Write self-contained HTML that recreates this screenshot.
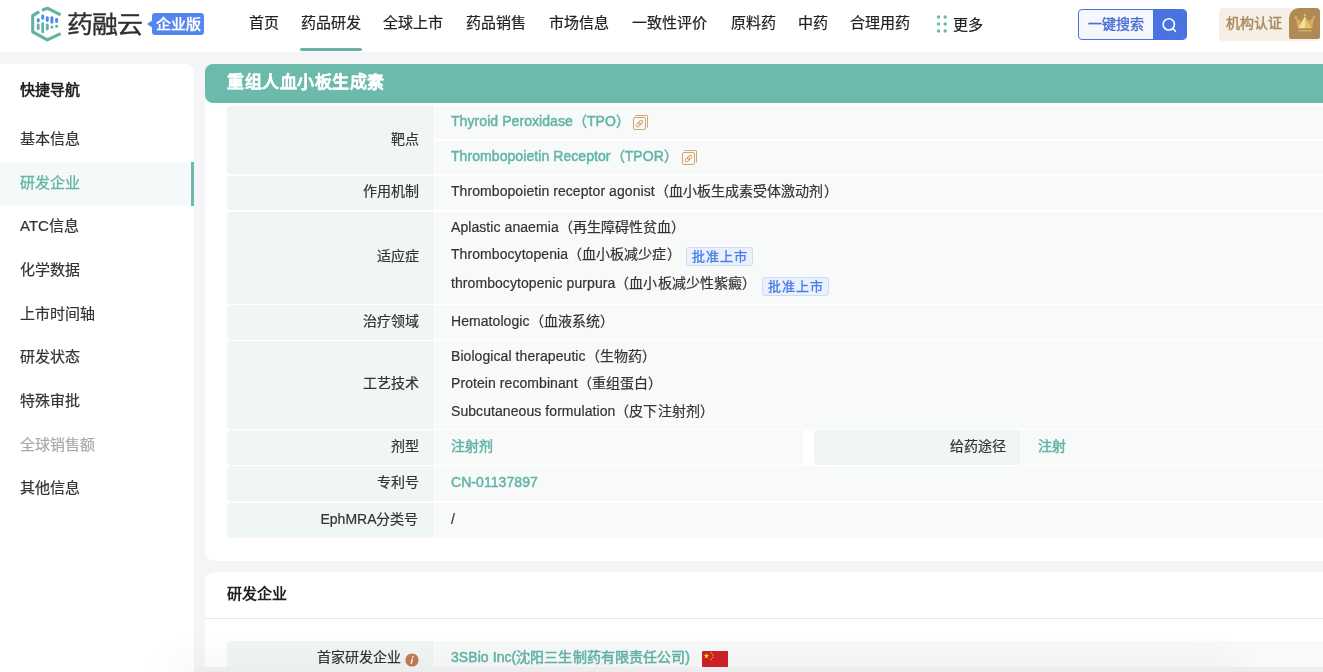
<!DOCTYPE html>
<html lang="zh-CN">
<head>
<meta charset="utf-8">
<style>
*{margin:0;padding:0;box-sizing:border-box;}
html,body{width:1323px;height:672px;overflow:hidden;}
body{background:#f5f5f7;font-family:"Liberation Sans",sans-serif;color:#333;position:relative;font-size:14px;-webkit-text-stroke-width:0.2px;}
#wrap{position:absolute;left:0;top:0;width:1323px;height:672px;will-change:transform;}
.abs{position:absolute;}
#hdr{position:absolute;left:0;top:0;width:1323px;height:52px;background:#fff;}
.nav{position:absolute;top:0;height:52px;line-height:46px;font-size:15px;color:#222;white-space:nowrap;}
.uline{position:absolute;left:300px;top:48px;width:62px;height:3px;border-radius:2px;background:#68b5a8;}
#side{position:absolute;left:0;top:64px;width:194px;height:620px;background:#fff;border-top-right-radius:8px;}
.si{position:absolute;left:20px;font-size:15px;color:#333;white-space:nowrap;line-height:20px;}
#card1{position:absolute;left:205px;top:64px;width:1130px;height:497px;background:#fff;border-radius:10px;}
#title{-webkit-text-stroke-width:0.12px;position:absolute;left:205px;top:64px;width:1130px;height:39px;background:#6cbaac;border-radius:8px;color:#fff;font-size:17px;letter-spacing:0.5px;font-weight:bold;line-height:38px;padding-left:22px;}
.row{position:absolute;left:227px;width:1110px;}
.lab{position:absolute;left:0;top:0;bottom:0;width:206.5px;background:#f0f5f5;border-radius:4px 0 0 4px;text-align:right;padding-right:15px;font-size:14px;color:#333;}
.val{position:absolute;left:208px;top:0;bottom:0;right:0;background:#f8fafa;font-size:14px;color:#333;}
.ln{position:absolute;left:16px;letter-spacing:0.07px;white-space:nowrap;line-height:20px;}
.teal{color:#63b5a7;-webkit-text-stroke:0.5px #63b5a7;}
.tag{display:inline-block;position:relative;top:1.5px;width:67px;height:19px;line-height:17px;padding:0 0 0 1px;text-align:center;border:1px solid #cfdcf7;background:#eaf1fd;color:#4a7ee6;font-size:13px;letter-spacing:1px;-webkit-text-stroke-width:0.35px;border-radius:3px;vertical-align:middle;}
#card2{position:absolute;left:205px;top:572px;width:1130px;height:120px;background:#fff;border-radius:10px;}
</style>
</head>
<body><div id="wrap">
<div id="hdr">
  <svg class="abs" style="left:26px;top:2px" width="40" height="44" viewBox="0 0 40 44">
    <g fill="none" stroke="#62b3a3" stroke-width="3.1" stroke-linecap="butt" stroke-linejoin="round">
      <path d="M16.0 8.3 L21.3 6.2 L34.6 12.9"/>
      <path d="M13.2 9.6 L6.7 13.6 L6.7 29.8 L21.3 37.9 L34.6 31.6"/>
    </g>
    <g stroke-linecap="round" stroke-width="2.9">
      <path d="M12.2 17.6 L12.2 19.0" stroke="#4a8af0"/>
      <path d="M16.7 13.9 L16.7 16.3" stroke="#4a8af0"/>
      <path d="M21.3 15.6 L21.3 18.6" stroke="#4a8af0"/>
      <path d="M25.9 15.6 L25.9 20.2" stroke="#4a8af0"/>
      <path d="M30.6 17.4 L30.6 19.6" stroke="#4a8af0"/>
      <path d="M12.2 23.0 L12.2 26.8" stroke="#62b3a3"/>
      <path d="M16.7 21.7 L16.7 30.0" stroke="#62b3a3"/>
      <path d="M21.3 23.0 L21.3 27.1" stroke="#62b3a3"/>
      <path d="M25.9 25.0 L25.9 25.2" stroke="#62b3a3"/>
      <path d="M30.6 24.2 L30.6 24.4" stroke="#62b3a3"/>
    </g>
  </svg>
  <div class="abs" style="left:67px;top:6px;font-size:26px;line-height:34px;color:#2e2e2e;letter-spacing:-1px;transform:scaleY(0.92);transform-origin:0 100%;-webkit-text-stroke-width:0.4px;">药融云</div>
  <div class="abs" style="left:152px;top:13px;width:52px;height:22px;background:#5486ee;border-radius:3px;"></div><div class="abs" style="left:152px;top:13px;width:52px;height:22px;color:#fff;font-size:15px;font-weight:bold;-webkit-text-stroke-width:0;line-height:22px;text-align:center;transform:scaleY(0.9);transform-origin:50% 80%;">企业版</div>
  <div class="abs" style="left:147px;top:20px;width:0;height:0;border-top:4px solid transparent;border-bottom:4px solid transparent;border-right:6px solid #5486ee;"></div>

  <div class="nav" style="left:249px">首页</div>
  <div class="nav" style="left:301px">药品研发</div>
  <div class="nav" style="left:383px">全球上市</div>
  <div class="nav" style="left:466px">药品销售</div>
  <div class="nav" style="left:549px">市场信息</div>
  <div class="nav" style="left:632px">一致性评价</div>
  <div class="nav" style="left:730.5px">原料药</div>
  <div class="nav" style="left:798px">中药</div>
  <div class="nav" style="left:850px">合理用药</div>
  <svg class="abs" style="left:930px;top:10px" width="20" height="26" viewBox="0 0 20 26"><g fill="#6cbaac"><circle cx="8.5" cy="7.1" r="1.75"/><circle cx="15.2" cy="7.1" r="1.75"/><circle cx="8.5" cy="14.1" r="1.75"/><circle cx="15.2" cy="14.1" r="1.75"/><circle cx="8.5" cy="21" r="1.75"/><circle cx="15.2" cy="21" r="1.75"/></g></svg>
  <div class="nav" style="left:953px;line-height:50px">更多</div>
  <div class="uline"></div>

  <div class="abs" style="left:1078px;top:9px;width:109px;height:31px;border:1px solid #4a73e0;border-radius:4px;background:#f4f7fe;overflow:hidden;">
    <div class="abs" style="left:9px;top:0;line-height:29px;font-size:14px;color:#4a6fd6;-webkit-text-stroke-width:0.4px;">一键搜索</div>
    <div class="abs" style="left:74px;top:-1px;width:35px;height:31px;background:#4a72e0;"></div>
    <svg class="abs" style="left:82px;top:6px" width="18" height="18" viewBox="0 0 18 18"><circle cx="7.8" cy="8.4" r="5.6" fill="none" stroke="#fff" stroke-width="1.6"/><line x1="11.9" y1="12.5" x2="14.4" y2="15.3" stroke="#fff" stroke-width="1.6" stroke-linecap="round"/></svg>
  </div>
  <div class="abs" style="left:1219px;top:8px;width:101px;height:33px;background:#f5efe6;border-radius:4px;overflow:hidden;">
    <div class="abs" style="left:7px;top:0;line-height:31px;font-size:14px;color:#a8885a;-webkit-text-stroke-width:0.4px;">机构认证</div>
    <div class="abs" style="left:70px;top:0;width:31px;height:31px;background:#b08a56;border-radius:10px 2px 2px 2px;"></div>
  </div>
  <svg class="abs" style="left:1280px;top:5px" width="43" height="40" viewBox="0 0 43 40">
    <polygon points="15.8,12.5 21.3,16.3 17.9,23.2" fill="#dcae58"/>
    <polygon points="33.9,12.5 28.7,16.3 32.1,23.2" fill="#dcae58"/>
    <circle cx="15.8" cy="12.5" r="1.3" fill="#dcae58"/>
    <circle cx="33.9" cy="12.5" r="1.3" fill="#dcae58"/>
    <circle cx="25" cy="10" r="1.2" fill="#e2b862"/>
    <polygon points="17.9,23.2 25,11.3 25,23.2" fill="#f3dfa4"/>
    <polygon points="25,11.3 32.1,23.2 25,23.2" fill="#e7c26c"/>
    <rect x="18.2" y="25" width="13.6" height="1.5" fill="#d9ab55"/>
  </svg>
</div>

<div id="side">
  <div class="si" style="top:16px;font-weight:bold;color:#222;-webkit-text-stroke-width:0;">快捷导航</div>
  <div class="si" style="top:65px">基本信息</div>
  <div class="abs" style="left:0;top:98px;width:194px;height:44px;background:#f6f9f9;"></div>
  <div class="abs" style="left:191px;top:98px;width:3px;height:44px;background:#6cbaac;"></div>
  <div class="si" style="top:109px;color:#63b5a7;-webkit-text-stroke-width:0.3px">研发企业</div>
  <div class="si" style="top:151.8px">ATC信息</div>
  <div class="si" style="top:196.2px">化学数据</div>
  <div class="si" style="top:239.8px">上市时间轴</div>
  <div class="si" style="top:283.4px">研发状态</div>
  <div class="si" style="top:327px">特殊审批</div>
  <div class="si" style="top:370.6px;color:#aaa">全球销售额</div>
  <div class="si" style="top:414.2px">其他信息</div>
</div>

<div id="card1"></div>
<div id="title">重组人血小板生成素</div>

<!-- rows -->
<div class="row" style="top:106px;height:68px;">
  <div class="lab"><span class="abs" style="right:15px;top:23.4px;line-height:20px">靶点</span></div>
  <div class="val">
    <div class="abs" style="left:0;right:0;top:33px;height:2px;background:#fff"></div>
    <div class="ln teal" style="top:5px">Thyroid Peroxidase（TPO）</div><svg class="abs" style="left:197px;top:8px" width="17" height="17" viewBox="0 0 17 17"><g fill="none" stroke="#d6a56c" stroke-width="1"><path d="M3.5 2.2 Q3.5 1.5 4.2 1.5 H14.8 Q15.5 1.5 15.5 2.2 V13 Q15.5 13.6 15 13.6"/><rect x="1.5" y="3.5" width="12" height="12" rx="1.5"/><g transform="rotate(-45 7.5 9.5)" stroke-width="0.95"><rect x="3.4" y="8" width="4.9" height="3" rx="1.5"/><rect x="6.6" y="8" width="4.9" height="3" rx="1.5"/></g></g></svg>
    <div class="ln teal" style="top:40px">Thrombopoietin Receptor（TPOR）</div><svg class="abs" style="left:246px;top:43px" width="17" height="17" viewBox="0 0 17 17"><g fill="none" stroke="#d6a56c" stroke-width="1"><path d="M3.5 2.2 Q3.5 1.5 4.2 1.5 H14.8 Q15.5 1.5 15.5 2.2 V13 Q15.5 13.6 15 13.6"/><rect x="1.5" y="3.5" width="12" height="12" rx="1.5"/><g transform="rotate(-45 7.5 9.5)" stroke-width="0.95"><rect x="3.4" y="8" width="4.9" height="3" rx="1.5"/><rect x="6.6" y="8" width="4.9" height="3" rx="1.5"/></g></g></svg>
  </div>
</div>
<div class="row" style="top:176px;height:34px;">
  <div class="lab"><span class="abs" style="right:15px;top:5px;line-height:20px">作用机制</span></div>
  <div class="val"><div class="ln" style="top:5px">Thrombopoietin receptor agonist（血小板生成素受体激动剂）</div></div>
</div>
<div class="row" style="top:212px;height:92px;">
  <div class="lab"><span class="abs" style="right:15px;top:33.9px;line-height:20px">适应症</span></div>
  <div class="val">
    <div class="ln" style="top:5px">Aplastic anaemia（再生障碍性贫血）</div>
    <div class="ln" style="top:32px">Thrombocytopenia（血小板减少症） <span class="tag" style="margin-left:1.4px">批准上市</span></div>
    <div class="ln" style="top:61px">thrombocytopenic purpura（血小板减少性紫癜） <span class="tag" style="margin-left:2.3px;top:2.3px">批准上市</span></div>
  </div>
</div>
<div class="row" style="top:305.3px;height:34.7px;">
  <div class="lab"><span class="abs" style="right:15px;top:5.9px;line-height:20px">治疗领域</span></div>
  <div class="val"><div class="ln" style="top:5.7px">Hematologic（血液系统）</div></div>
</div>
<div class="row" style="top:341.2px;height:87.6px;">
  <div class="lab"><span class="abs" style="right:15px;top:31.9px;line-height:20px">工艺技术</span></div>
  <div class="val">
    <div class="ln" style="top:4.8px">Biological therapeutic（生物药）</div>
    <div class="ln" style="top:31.8px">Protein recombinant（重组蛋白）</div>
    <div class="ln" style="top:59.8px">Subcutaneous formulation（皮下注射剂）</div>
  </div>
</div>
<div class="row" style="top:430.4px;height:34.5px;">
  <div class="lab"><span class="abs" style="right:15px;top:5.5px;line-height:20px">剂型</span></div>
  <div class="val" style="right:auto;width:368px;"><div class="ln teal" style="top:5.6px">注射剂</div></div>
  <div class="lab" style="left:587px;border-radius:4px 0 0 4px;"><span class="abs" style="right:15px;top:5.5px;line-height:20px">给药途径</span></div>
  <div class="val" style="left:795px;"><div class="ln teal" style="top:5.6px">注射</div></div>
</div>
<div class="row" style="top:466.3px;height:34.9px;">
  <div class="lab"><span class="abs" style="right:15px;top:5.6px;line-height:20px">专利号</span></div>
  <div class="val"><div class="ln teal" style="top:5.7px">CN-01137897</div></div>
</div>
<div class="row" style="top:503px;height:34.8px;">
  <div class="lab"><span class="abs" style="right:15px;top:5.7px;line-height:20px">EphMRA分类号</span></div>
  <div class="val"><div class="ln" style="top:6px">/</div></div>
</div>

<div id="card2">
  <div class="abs" style="left:22px;top:12px;font-size:15px;font-weight:bold;color:#222;-webkit-text-stroke-width:0;line-height:20px">研发企业</div>
  <div class="abs" style="left:0;top:46px;width:1130px;height:1px;background:#e8e8e8"></div>
</div>
<div class="row" style="top:641px;height:40px;">
  <div class="lab"><span class="abs" style="right:33px;top:6px;line-height:20px">首家研发企业</span>
    <svg class="abs" style="left:177.5px;top:11.5px" width="14" height="14" viewBox="0 0 14 14"><circle cx="7" cy="7" r="6.6" fill="#c27c52"/><circle cx="7.9" cy="3.9" r="0.9" fill="#fff"/><path d="M7.2 6.2 L6.3 10.4" stroke="#fff" stroke-width="1.4" stroke-linecap="round"/></svg>
  </div>
  <div class="val"><div class="ln teal" style="top:6px">3SBio Inc(沈阳三生制药有限责任公司)</div>
    <svg class="abs" style="left:266.5px;top:10px" width="26.5" height="16" viewBox="0 0 30 18"><rect width="30" height="18" rx="1.2" fill="#cf2128"/><polygon points="5.00,2.30 5.78,4.53 8.14,4.58 6.26,6.01 6.94,8.27 5.00,6.92 3.06,8.27 3.74,6.01 1.86,4.58 4.22,4.53" fill="#ffde00"/><polygon points="10.40,1.00 10.68,1.81 11.54,1.83 10.86,2.35 11.11,3.17 10.40,2.68 9.69,3.17 9.94,2.35 9.26,1.83 10.12,1.81" fill="#ffde00"/><polygon points="12.40,3.20 12.68,4.01 13.54,4.03 12.86,4.55 13.11,5.37 12.40,4.88 11.69,5.37 11.94,4.55 11.26,4.03 12.12,4.01" fill="#ffde00"/><polygon points="12.40,6.10 12.68,6.91 13.54,6.93 12.86,7.45 13.11,8.27 12.40,7.78 11.69,8.27 11.94,7.45 11.26,6.93 12.12,6.91" fill="#ffde00"/><polygon points="10.40,8.20 10.68,9.01 11.54,9.03 10.86,9.55 11.11,10.37 10.40,9.88 9.69,10.37 9.94,9.55 9.26,9.03 10.12,9.01" fill="#ffde00"/></svg>
  </div>
</div>
<div class="abs" style="left:194px;top:667px;width:1066px;height:20px;background:#ededf0;box-shadow:-24px -2px 40px 0 rgba(0,0,0,0.065);"></div><div class="abs" style="left:194px;top:667px;width:1200px;height:20px;background:#ededf0;"></div>
</div></body>
</html>
